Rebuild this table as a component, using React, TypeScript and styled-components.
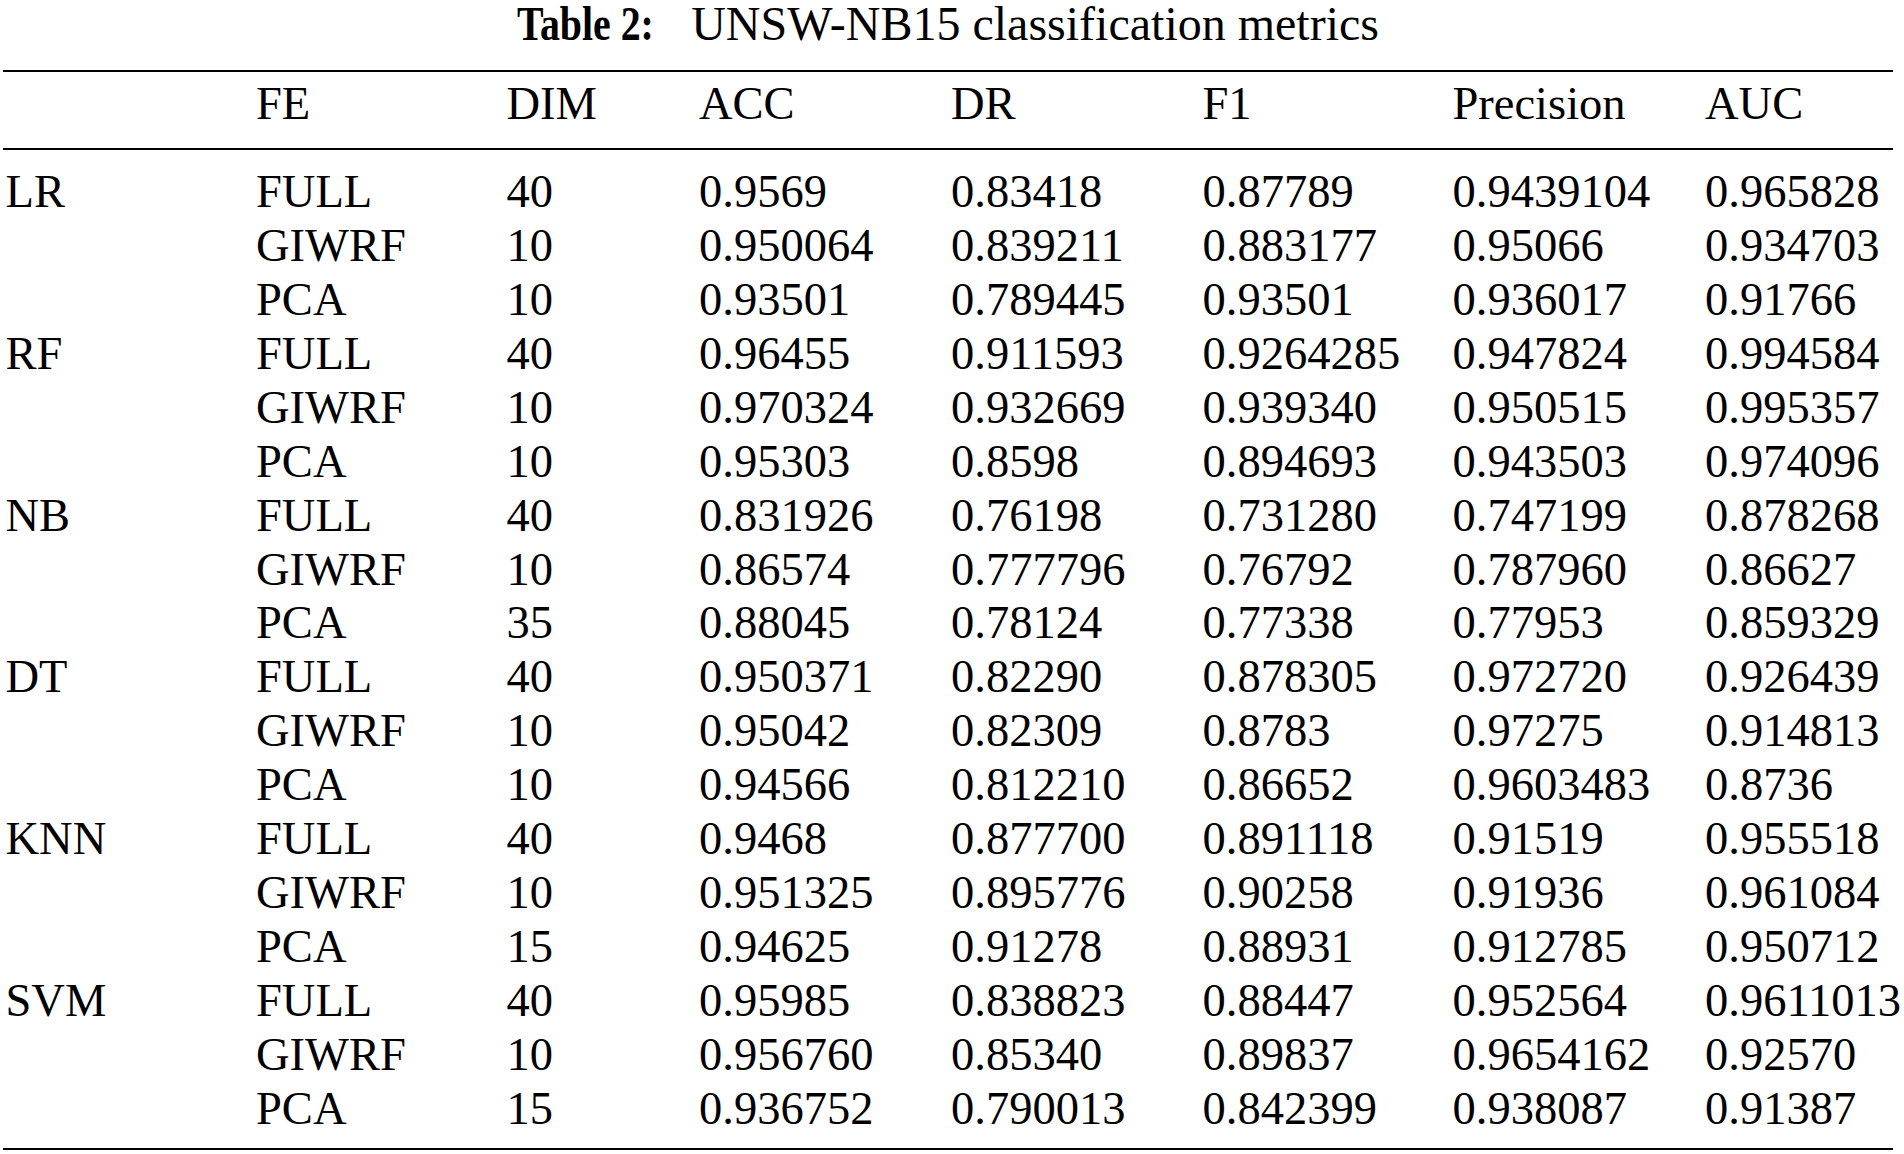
import React from "react";
import styled, { createGlobalStyle } from "styled-components";

const GlobalStyle = createGlobalStyle`
  html, body {
    margin: 0;
    padding: 0;
    background: #ffffff;
  }
  body {
    font-family: "Liberation Serif", "Times New Roman", serif;
    color: #000000;
  }
`;

const Page = styled.div`
  width: 1904px;
  padding-left: 3px;
  box-sizing: border-box;
`;

const Table = styled.section`
  width: 1890px;
  display: flex;
  flex-direction: column;
`;

const Caption = styled.div`
  display: flex;
  justify-content: center;
  align-items: baseline;
  gap: 38px;
  font-size: 48px;
  line-height: 48px;
  height: 48px;
  margin-bottom: 21.7px;
  white-space: nowrap;
`;

const CaptionLabel = styled.span`
  display: inline-block;
  font-weight: 700;
  transform: scaleX(0.83);
  transform-origin: left center;
  margin-right: -28.8px;
`;

const Rule = styled.div`
  height: 2px;
  background: #000000;
`;

const Section = styled.div<{ $top: number; $bottom: number }>`
  padding-top: ${(p) => p.$top}px;
  padding-bottom: ${(p) => p.$bottom}px;
  padding-left: 2.5px;
`;

const Row = styled.div`
  display: grid;
  grid-template-columns: 250.5px 250.5px 192.5px 252px 251.5px 250px 252.5px minmax(0, 1fr);
  font-size: 46.5px;
  line-height: 53.9px;
  height: 53.9px;
  white-space: nowrap;
`;

const Cell = styled.span`
  display: block;
  overflow: visible;
`;

type Entry = {
  fe: string;
  dim: string;
  acc: string;
  dr: string;
  f1: string;
  precision: string;
  auc: string;
};

type Group = { model: string; rows: Entry[] };

const headers = ["", "FE", "DIM", "ACC", "DR", "F1", "Precision", "AUC"];

const groups: Group[] = [
  {
    model: "LR",
    rows: [
      { fe: "FULL", dim: "40", acc: "0.9569", dr: "0.83418", f1: "0.87789", precision: "0.9439104", auc: "0.965828" },
      { fe: "GIWRF", dim: "10", acc: "0.950064", dr: "0.839211", f1: "0.883177", precision: "0.95066", auc: "0.934703" },
      { fe: "PCA", dim: "10", acc: "0.93501", dr: "0.789445", f1: "0.93501", precision: "0.936017", auc: "0.91766" },
    ],
  },
  {
    model: "RF",
    rows: [
      { fe: "FULL", dim: "40", acc: "0.96455", dr: "0.911593", f1: "0.9264285", precision: "0.947824", auc: "0.994584" },
      { fe: "GIWRF", dim: "10", acc: "0.970324", dr: "0.932669", f1: "0.939340", precision: "0.950515", auc: "0.995357" },
      { fe: "PCA", dim: "10", acc: "0.95303", dr: "0.8598", f1: "0.894693", precision: "0.943503", auc: "0.974096" },
    ],
  },
  {
    model: "NB",
    rows: [
      { fe: "FULL", dim: "40", acc: "0.831926", dr: "0.76198", f1: "0.731280", precision: "0.747199", auc: "0.878268" },
      { fe: "GIWRF", dim: "10", acc: "0.86574", dr: "0.777796", f1: "0.76792", precision: "0.787960", auc: "0.86627" },
      { fe: "PCA", dim: "35", acc: "0.88045", dr: "0.78124", f1: "0.77338", precision: "0.77953", auc: "0.859329" },
    ],
  },
  {
    model: "DT",
    rows: [
      { fe: "FULL", dim: "40", acc: "0.950371", dr: "0.82290", f1: "0.878305", precision: "0.972720", auc: "0.926439" },
      { fe: "GIWRF", dim: "10", acc: "0.95042", dr: "0.82309", f1: "0.8783", precision: "0.97275", auc: "0.914813" },
      { fe: "PCA", dim: "10", acc: "0.94566", dr: "0.812210", f1: "0.86652", precision: "0.9603483", auc: "0.8736" },
    ],
  },
  {
    model: "KNN",
    rows: [
      { fe: "FULL", dim: "40", acc: "0.9468", dr: "0.877700", f1: "0.891118", precision: "0.91519", auc: "0.955518" },
      { fe: "GIWRF", dim: "10", acc: "0.951325", dr: "0.895776", f1: "0.90258", precision: "0.91936", auc: "0.961084" },
      { fe: "PCA", dim: "15", acc: "0.94625", dr: "0.91278", f1: "0.88931", precision: "0.912785", auc: "0.950712" },
    ],
  },
  {
    model: "SVM",
    rows: [
      { fe: "FULL", dim: "40", acc: "0.95985", dr: "0.838823", f1: "0.88447", precision: "0.952564", auc: "0.9611013" },
      { fe: "GIWRF", dim: "10", acc: "0.956760", dr: "0.85340", f1: "0.89837", precision: "0.9654162", auc: "0.92570" },
      { fe: "PCA", dim: "15", acc: "0.936752", dr: "0.790013", f1: "0.842399", precision: "0.938087", auc: "0.91387" },
    ],
  },
];

export default function App() {
  return (
    <>
      <GlobalStyle />
      <Page>
        <Table>
          <Caption>
            <CaptionLabel>Table 2:</CaptionLabel>
            <span>UNSW-NB15 classification metrics</span>
          </Caption>
          <Rule />
          <Section $top={5} $bottom={17.1}>
            <Row>
              {headers.map((h, i) => (
                <Cell key={i}>{h}</Cell>
              ))}
            </Row>
          </Section>
          <Rule />
          <Section $top={15.7} $bottom={12.4}>
            {groups.map((g) =>
              g.rows.map((r, i) => (
                <Row key={g.model + r.fe}>
                  <Cell>{i === 0 ? g.model : ""}</Cell>
                  <Cell>{r.fe}</Cell>
                  <Cell>{r.dim}</Cell>
                  <Cell>{r.acc}</Cell>
                  <Cell>{r.dr}</Cell>
                  <Cell>{r.f1}</Cell>
                  <Cell>{r.precision}</Cell>
                  <Cell>{r.auc}</Cell>
                </Row>
              ))
            )}
          </Section>
          <Rule />
        </Table>
      </Page>
    </>
  );
}
